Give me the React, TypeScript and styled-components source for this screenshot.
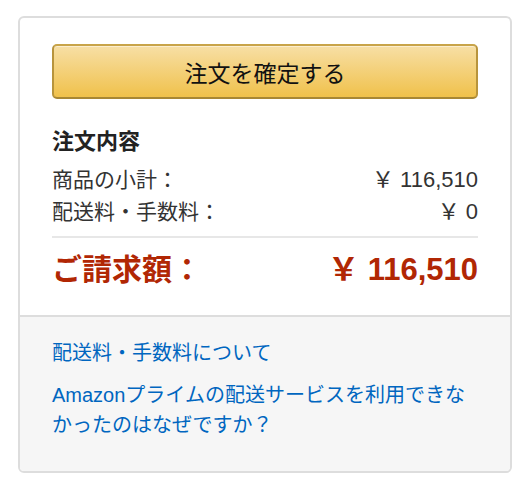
import styled, { createGlobalStyle } from 'styled-components';

const GlobalStyle = createGlobalStyle`
  html, body {
    margin: 0;
    padding: 0;
    background: #ffffff;
  }
  body {
    font-family: 'Liberation Sans', 'Noto Sans CJK JP', sans-serif;
    color: #333333;
  }
`;

const Page = styled.div`
  padding: 16px 0 0 18px;
`;

const Box = styled.div`
  width: 494px;
  box-sizing: border-box;
  border: 2px solid #dddddd;
  border-radius: 6px;
  overflow: hidden;
  background: #ffffff;
`;

const Summary = styled.section`
  padding: 26px 32px 25px;
`;

const PlaceOrderButton = styled.button`
  display: flex;
  align-items: center;
  justify-content: center;
  width: 100%;
  height: 55px;
  box-sizing: border-box;
  border: 2px solid;
  border-color: #c8a449 #b8943c #a88734;
  border-radius: 5px;
  background: linear-gradient(to bottom, #f7dfa5, #f0c14b);
  box-shadow: inset 0 1px 0 rgba(255, 255, 255, 0.45);
  font-family: 'Liberation Sans', 'Noto Sans CJK JP', sans-serif;
  font-size: 23px;
  color: #111111;
  cursor: pointer;
  padding: 0;
`;

const Heading = styled.h3`
  margin: 28px 0 7px;
  font-size: 22px;
  line-height: 30px;
  font-weight: 700;
  color: #222222;
`;

const Row = styled.div<{ $total?: boolean }>`
  display: flex;
  justify-content: space-between;
  align-items: center;
  font-size: ${(p) => (p.$total ? '30px' : '21px')};
  line-height: ${(p) => (p.$total ? '40px' : '32px')};
  font-weight: ${(p) => (p.$total ? 700 : 400)};
  color: ${(p) => (p.$total ? '#b12704' : '#333333')};
`;

const Amount = styled.span<{ $total?: boolean }>`
  font-size: ${(p) => (p.$total ? '31px' : '22px')};
`;

const Divider = styled.hr`
  margin: 8px 0 12px;
  border: none;
  height: 2px;
  background: #e7e7e7;
`;

const Help = styled.section`
  background: #f6f6f6;
  border-top: 2px solid #dddddd;
  padding: 21px 32px 31px;
  display: flex;
  flex-direction: column;
  gap: 12px;
`;

const HelpLink = styled.a`
  font-size: 20px;
  line-height: 30px;
  color: #0066c0;
  text-decoration: none;
  cursor: pointer;
`;

export default function App() {
  return (
    <>
      <GlobalStyle />
      <Page>
        <Box>
          <Summary>
            <PlaceOrderButton>注文を確定する</PlaceOrderButton>
            <Heading>注文内容</Heading>
            <Row>
              <span>商品の小計：</span>
              <Amount>￥ 116,510</Amount>
            </Row>
            <Row>
              <span>配送料・手数料：</span>
              <Amount>￥ 0</Amount>
            </Row>
            <Divider />
            <Row $total>
              <span>ご請求額：</span>
              <Amount $total>￥ 116,510</Amount>
            </Row>
          </Summary>
          <Help>
            <HelpLink>配送料・手数料について</HelpLink>
            <HelpLink>Amazonプライムの配送サービスを利用できなかったのはなぜですか？</HelpLink>
          </Help>
        </Box>
      </Page>
    </>
  );
}
